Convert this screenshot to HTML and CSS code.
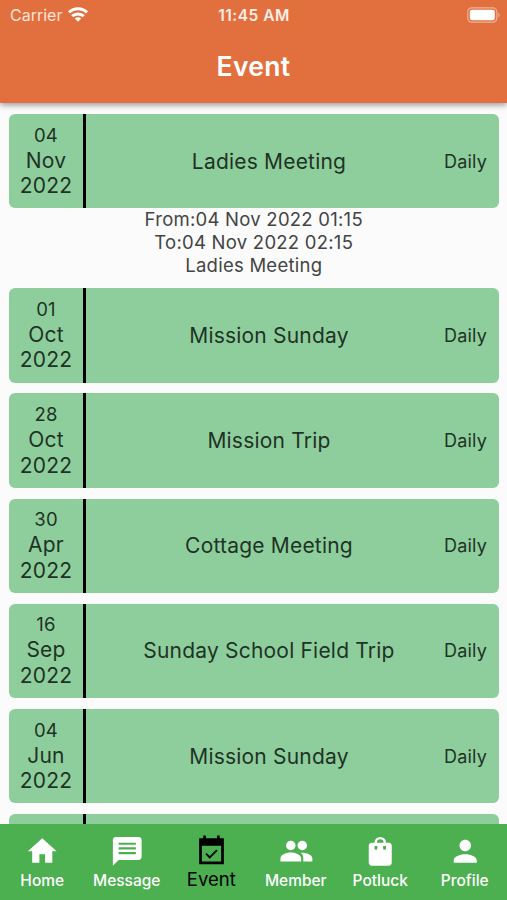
FILE: index.html
```html
<!DOCTYPE html>
<html lang="en">
  <head>
    <meta charset="UTF-8" />
    <meta name="viewport" content="width=device-width, initial-scale=1.0" />
    <title>Event</title>
    <link rel="stylesheet" href="styles.css">
  </head>
  <body>
    <header class="header">
      <div class="status-bar">
        <div class="carrier">
          <span>Carrier</span>
          <svg width="20" height="15" viewBox="0 0 20 15" fill="none" stroke="#fff" stroke-width="3">
            <path d="M1 5.400a13 13 0 0 1 18 0" />
            <path d="M4.200 9.200a8.400 8.400 0 0 1 11.600 0" />
            <path d="M10 14.800L6.800 11.500a4.600 4.600 0 0 1 6.400 0z" fill="#fff" stroke="none" />
          </svg>
        </div>
        <span class="time">11:45 AM</span>
        <svg class="battery" width="34" height="16" viewBox="0 0 34 16">
          <rect x="0.8" y="0.8" width="29" height="14.400" rx="4" fill="none" stroke="#fff" stroke-opacity="0.45" stroke-width="1.200" />
          <rect x="2.800" y="2.800" width="25" height="10.400" rx="2.200" fill="#fff" />
          <path d="M31.400 5.600q2.400 2.400 0 4.800z" fill="#fff" fill-opacity="0.5" />
        </svg>
      </div>
      <h1>Event</h1>
    </header>

    <main class="events">
      <div class="card">
        <div class="date"><span class="day">04</span><span>Nov</span><span>2022</span></div>
        <div class="title">Ladies Meeting</div>
        <div class="repeat">Daily</div>
      </div>
      <div class="details">
        <p>From:04 Nov 2022 01:15</p>
        <p>To:04 Nov 2022 02:15</p>
        <p>Ladies Meeting</p>
      </div>
      <div class="card">
        <div class="date"><span class="day">01</span><span>Oct</span><span>2022</span></div>
        <div class="title">Mission Sunday</div>
        <div class="repeat">Daily</div>
      </div>
      <div class="card">
        <div class="date"><span class="day">28</span><span>Oct</span><span>2022</span></div>
        <div class="title">Mission Trip</div>
        <div class="repeat">Daily</div>
      </div>
      <div class="card">
        <div class="date"><span class="day">30</span><span>Apr</span><span>2022</span></div>
        <div class="title">Cottage Meeting</div>
        <div class="repeat">Daily</div>
      </div>
      <div class="card">
        <div class="date"><span class="day">16</span><span>Sep</span><span>2022</span></div>
        <div class="title">Sunday School Field Trip</div>
        <div class="repeat">Daily</div>
      </div>
      <div class="card">
        <div class="date"><span class="day">04</span><span>Jun</span><span>2022</span></div>
        <div class="title">Mission Sunday</div>
        <div class="repeat">Daily</div>
      </div>
      <div class="card">
        <div class="date"></div>
      </div>
    </main>

    <nav class="tabs">
      <a class="tab">
        <svg viewBox="0 0 24 24"><path d="M10 20v-6h4v6h5v-8h3L12 3 2 12h3v8z" /></svg>
        <span>Home</span>
      </a>
      <a class="tab">
        <svg viewBox="0 0 24 24"><path d="M20 2H4c-1.100 0-1.990.9-1.990 2L2 22l4-4h14c1.100 0 2-.9 2-2V4c0-1.100-.9-2-2-2zM6 6h12v1.500H6zM6 9.300h12v1.500H6zM6 12.500h12V14H6z" fill-rule="evenodd" /></svg>
        <span>Message</span>
      </a>
      <a class="tab active">
        <svg viewBox="0 0 24 24"><path d="M21 3h-3V1h-2v2H8V1H6v2H3v19h18V3zm-2 17H5V8.500h14V20z" /><path d="M8 14.300l2.700 2.700 5.300-5.300" fill="none" stroke="#000" stroke-width="1.400" /></svg>
        <span>Event</span>
      </a>
      <a class="tab">
        <svg viewBox="0 0 24 24">
          <circle cx="8.200" cy="8" r="3.300" />
          <circle cx="16.200" cy="8" r="3.300" />
          <path d="M8.200 12.900c-2.800 0-7.200 1.300-7.200 4v2.300h14.400v-2.300c0-2.700-4.400-4-7.200-4zM15 13c1.300.9 1.900 2.200 1.900 3.900v2.300h6.300v-2.300c0-2.700-4.700-4.200-8.200-3.900z" />
        </svg>
        <span>Member</span>
      </a>
      <a class="tab">
        <svg viewBox="0 0 24 24"><path fill-rule="evenodd" d="M18 6H16a4 4 0 0 0-8 0H6C4.900 6 4 6.900 4 8v12c0 1.100.9 2 2 2h12c1.100 0 2-.9 2-2V8c0-1.100-.9-2-2-2zM12 3.700A2.300 2.300 0 0 1 14.300 6H9.700A2.300 2.300 0 0 1 12 3.700zM10 10a1 1 0 0 1-2 0V8.300h2zm6 0a1 1 0 0 1-2 0V8.300h2z" /></svg>
        <span>Potluck</span>
      </a>
      <a class="tab">
        <svg viewBox="0 0 24 24"><path d="M12 12c2.210 0 4-1.790 4-4s-1.790-4-4-4-4 1.790-4 4 1.790 4 4 4zm0 2c-2.670 0-8 1.340-8 4v2h16v-2c0-2.660-5.330-4-8-4z" /></svg>
        <span>Profile</span>
      </a>
    </nav>
  </body>
</html>
```
FILE: styles.css
```css
* {
  box-sizing: border-box;
}

body {
  margin: 0;
  height: 100vh;
  display: flex;
  flex-direction: column;
  overflow: hidden;
  background-color: #fbfbfb;
  font-family: Inter, "Liberation Sans", sans-serif;
  color: #1f3325;
}

.header {
  flex: none;
  height: 103px;
  background-color: #e2703f;
  color: #fff;
  box-shadow: 0 2px 6px rgba(0, 0, 0, 0.4);
  z-index: 1;
}

.status-bar {
  display: grid;
  grid-template-columns: 1fr auto 1fr;
  align-items: center;
  height: 29px;
  padding: 0 6px 0 10px;
  font-size: 16px;
}

.carrier {
  display: flex;
  align-items: center;
  gap: 6px;
  color: #fde5da;
}

.time {
  margin-right: 3px;
  padding-top: 1px;
  font-size: 15.500px;
  letter-spacing: 0.500px;
  font-weight: 600;
  color: #fdeee7;
}

.battery {
  justify-self: end;
}

h1 {
  margin: 20px 0 0;
  font-size: 26.500px;
  line-height: 34px;
  letter-spacing: 0.300px;
  font-weight: 600;
  text-align: center;
}

.events {
  flex: 1;
  min-height: 0;
  overflow: hidden;
  padding: 11px 8.500px 0 9px;
}

.card {
  display: flex;
  align-items: center;
  height: 94.300px;
  margin-bottom: 10.850px;
  border-radius: 6px;
  background-color: #8ece9c;
}

.date {
  display: flex;
  flex-direction: column;
  justify-content: center;
  width: 77px;
  height: 100%;
  padding-bottom: 1px;
  border-right: 3px solid #000;
  text-align: center;
  font-size: 21px;
  line-height: 25.500px;
  letter-spacing: 0.200px;
}

.date .day {
  font-size: 18.500px;
  line-height: 25px;
}

.title {
  flex: 1;
  padding-left: 8px;
  font-size: 21px;
  letter-spacing: 0.200px;
  text-align: center;
}

.repeat {
  padding-right: 11.500px;
  font-size: 18px;
  letter-spacing: 0.200px;
}

.details {
  margin: -10.850px 0 11px;
  font-size: 18.500px;
  line-height: 23px;
  letter-spacing: 0.250px;
  text-align: center;
  color: #444;
}

.details p {
  margin: 0;
}

.tabs {
  flex: none;
  display: flex;
  height: 76px;
  background-color: #4caf50;
  z-index: 1;
}

.tab {
  flex: 1;
  display: flex;
  flex-direction: column;
  align-items: center;
  padding-top: 9.500px;
  color: #fff;
  font-size: 15.500px;
  font-weight: 500;
  line-height: 20px;
}

.tab svg {
  width: 34.500px;
  height: 34.500px;
  margin-bottom: 3px;
  fill: currentColor;
}

.tab.active {
  color: #000;
  font-size: 18.500px;
  font-weight: 400;
}

.tab.active svg {
  width: 33px;
  height: 33px;
  margin-bottom: 2px;
}
```
